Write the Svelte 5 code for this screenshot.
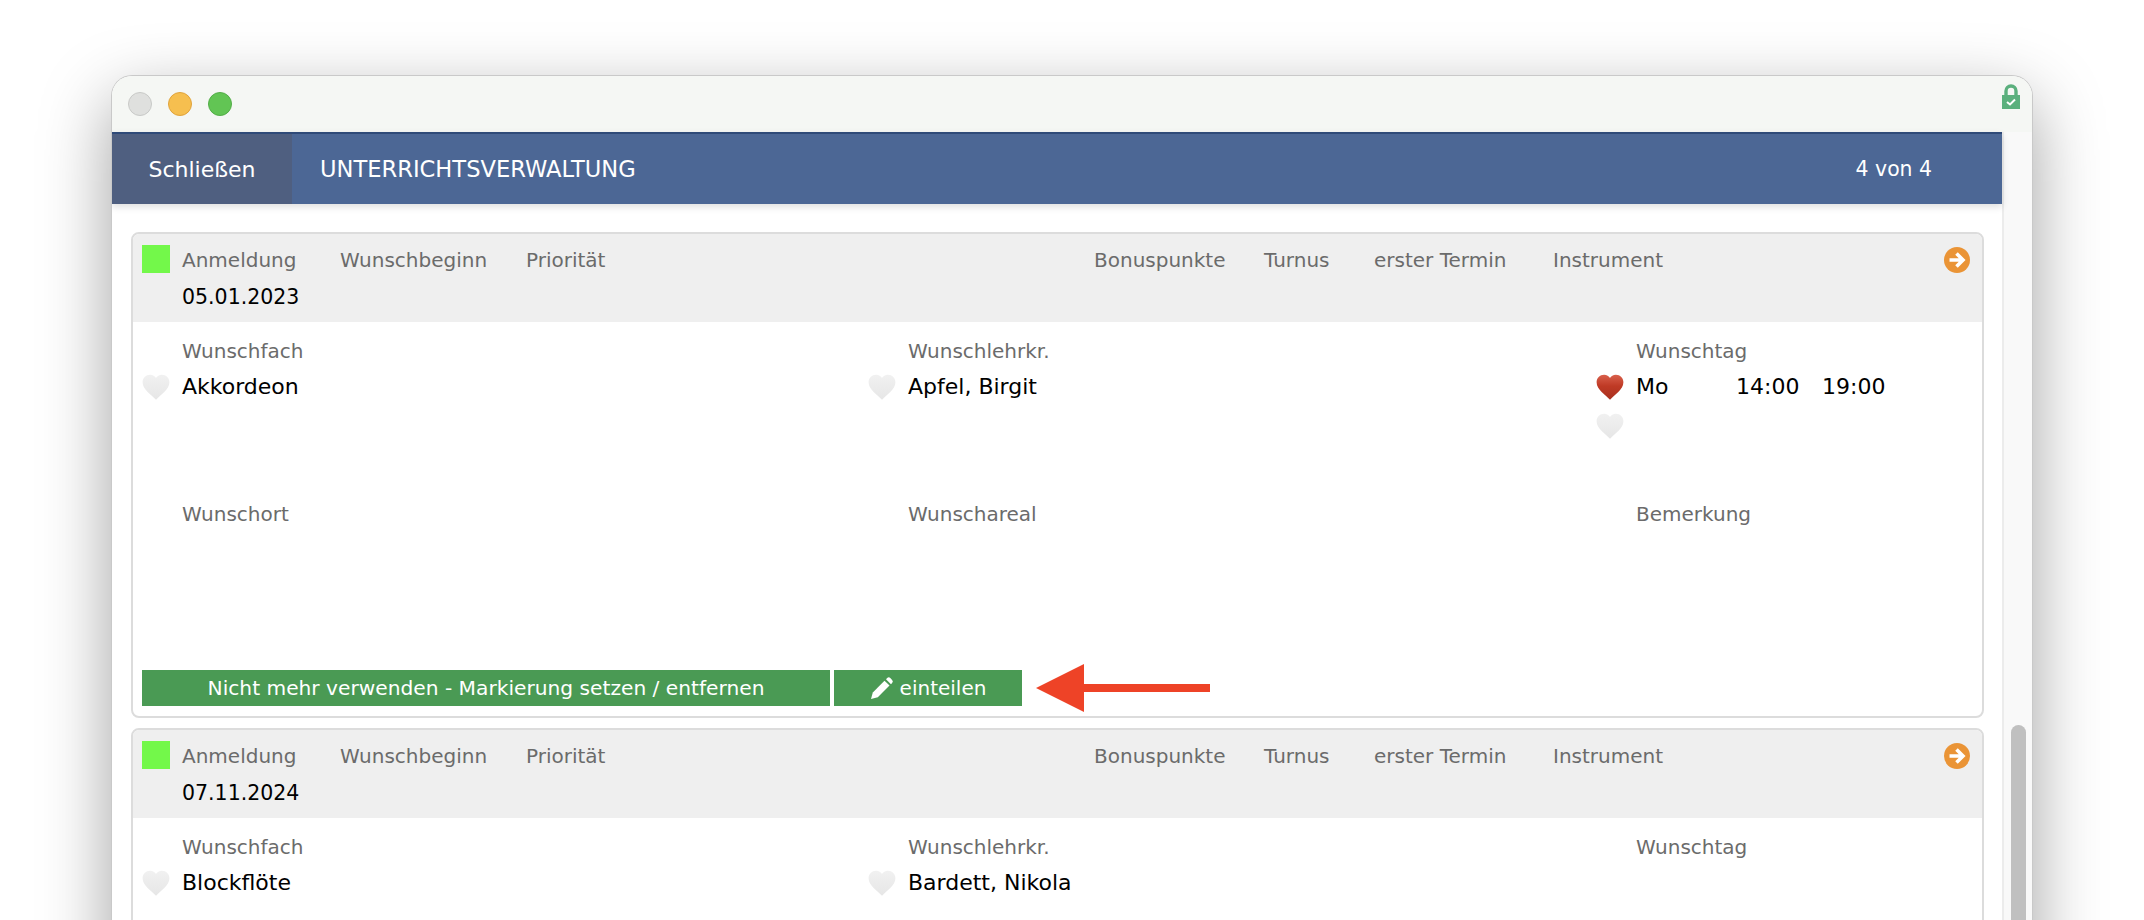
<script lang="ts">
    const cards = [
        {
            date: "05.01.2023",
            subject: "Akkordeon",
            teacher: "Apfel, Birgit",
            days: [{ day: "Mo", from: "14:00", to: "19:00", fav: true }, { day: "", from: "", to: "", fav: false }],
            full: true
        },
        {
            date: "07.11.2024",
            subject: "Blockflöte",
            teacher: "Bardett, Nikola",
            days: [],
            full: false
        }
    ];

    const headLabels = ["Wunschbeginn", "Priorität", "Bonuspunkte", "Turnus", "erster Termin", "Instrument"];
</script>

{#snippet heart(fav)}
    <svg class="heart" viewBox="0 0 28 26" aria-hidden="true">
        <path
            d="M14 25C10 20 1.500 15.500 1.500 8.500 1.500 4.500 4.500 1.500 8.500 1.500c2.500 0 4.500 1.200 5.500 3 1-1.800 3-3 5.500-3 4 0 7 3 7 7C26.500 15.500 18 20 14 25z"
            fill={fav ? "url(#red)" : "url(#grey)"}
        />
    </svg>
{/snippet}

<svg class="defs" aria-hidden="true">
    <defs>
        <linearGradient id="red" x1="0" y1="0" x2="0" y2="1">
            <stop offset="0" stop-color="#d9604c" />
            <stop offset="0.45" stop-color="#bf3a25" />
            <stop offset="1" stop-color="#a8301f" />
        </linearGradient>
        <linearGradient id="grey" x1="0" y1="0" x2="0" y2="1">
            <stop offset="0" stop-color="#f1f1f1" />
            <stop offset="1" stop-color="#e6e6e6" />
        </linearGradient>
    </defs>
</svg>

<div class="page">
    <div class="window">
        <div class="titlebar">
            <div class="lights">
                <span class="light grey"></span>
                <span class="light yellow"></span>
                <span class="light green"></span>
            </div>
            <svg class="lock" viewBox="0 0 18 25" aria-hidden="true">
                <path d="M4 12V7a5 5 0 0 1 10 0v5" fill="none" stroke="#5bb07d" stroke-width="3.400" />
                <rect x="0" y="11" width="18" height="14" fill="#5bb07d" />
                <path d="M5 18l3 2.500 5-5" fill="none" stroke="#fff" stroke-width="2" />
            </svg>
        </div>

        <div class="content">
            <div class="main">
                <div class="topbar">
                    <button class="close">Schließen</button>
                    <div class="title">UNTERRICHTSVERWALTUNG</div>
                    <div class="count">4 von 4</div>
                </div>

                <div class="list">
                    {#each cards as card}
                        <section class="card" class:full={card.full}>
                            <div class="head">
                                <span class="flag"></span>
                                <div class="cell">
                                    <span class="label">Anmeldung</span>
                                    <span class="value date">{card.date}</span>
                                </div>
                                {#each headLabels as label}
                                    <span class="label">{label}</span>
                                {/each}
                                <svg class="go" viewBox="0 0 26 26" aria-hidden="true">
                                    <circle cx="13" cy="13" r="13" fill="#ea9436" />
                                    <path d="M5.500 13h13M12.500 6.500l6.500 6.500-6.500 6.500" fill="none" stroke="#fff" stroke-width="3.600" />
                                </svg>
                            </div>

                            <div class="body">
                                <div class="fields">
                                    <div class="field">
                                        <span class="label">Wunschfach</span>
                                        <div class="row">
                                            {@render heart(false)}
                                            <span class="value">{card.subject}</span>
                                        </div>
                                    </div>
                                    <div class="field">
                                        <span class="label">Wunschlehrkr.</span>
                                        <div class="row">
                                            {@render heart(false)}
                                            <span class="value">{card.teacher}</span>
                                        </div>
                                    </div>
                                    <div class="field">
                                        <span class="label">Wunschtag</span>
                                        <div class="days">
                                            {#each card.days as d}
                                                <div class="row">
                                                    {@render heart(d.fav)}
                                                    <span class="value day">{d.day}</span>
                                                    <span class="value from">{d.from}</span>
                                                    <span class="value">{d.to}</span>
                                                </div>
                                            {/each}
                                        </div>
                                    </div>
                                    {#if card.full}
                                        <div class="field"><span class="label">Wunschort</span></div>
                                        <div class="field"><span class="label">Wunschareal</span></div>
                                        <div class="field"><span class="label">Bemerkung</span></div>
                                    {/if}
                                </div>

                                {#if card.full}
                                    <div class="actions">
                                        <button class="action wide">Nicht mehr verwenden - Markierung setzen / entfernen</button>
                                        <button class="action narrow">
                                            <svg class="pencil" viewBox="0 0 24 24" aria-hidden="true">
                                                <path d="M1 23l1.800-6.500L14.500 4.800l5 4.800L7.800 21.300z" fill="#fff" />
                                                <path d="M16 3.300l1.200-1.200a2.200 2.200 0 0 1 3.100 0l1.800 1.800a2.200 2.200 0 0 1 0 3.100L21 8.200z" fill="#fff" />
                                            </svg>
                                            einteilen
                                        </button>
                                        <svg class="arrow" viewBox="0 0 174 48" aria-hidden="true">
                                            <path d="M0 24L48 0v20h126v8H48v20z" fill="#ee4327" />
                                        </svg>
                                    </div>
                                {/if}
                            </div>
                        </section>
                    {/each}
                </div>
            </div>

            <div class="track">
                <div class="thumb"></div>
            </div>
        </div>
    </div>
</div>

<style>
    :global(body) {
        margin: 0;
        background: #fff;
    }

    .defs {
        position: absolute;
        width: 0;
        height: 0;
    }

    .page {
        height: 920px;
        overflow: hidden;
        padding: 76px 112px 0;
        box-sizing: border-box;
        font-family: "DejaVu Sans", Verdana, sans-serif;
        font-size: 20px;
    }

    .window {
        width: 1920px;
        height: 900px;
        display: flex;
        flex-direction: column;
        border-radius: 20px 20px 0 0;
        background: #fff;
        box-shadow: 0 0 0 1px #c9c9c9, 0 24px 70px rgba(0, 0, 0, 0.38);
        overflow: hidden;
    }

    .titlebar {
        height: 56px;
        flex: none;
        display: flex;
        justify-content: space-between;
        background: #f5f7f4;
    }

    .lights {
        display: flex;
        gap: 16px;
        padding: 16px 0 0 16px;
    }

    .light {
        width: 24px;
        height: 24px;
        border-radius: 50%;
        box-sizing: border-box;
        border: 1px solid;
    }

    .grey { background: #dfe0de; border-color: #c8c9c7; }
    .yellow { background: #f6bf4f; border-color: #e0a33c; }
    .green { background: #62c554; border-color: #53ad48; }

    .lock {
        width: 18px;
        height: 25px;
        margin: 8px 12px 0 0;
    }

    .content {
        flex: 1;
        display: flex;
        min-height: 0;
    }

    .main {
        flex: 1;
        min-width: 0;
    }

    .topbar {
        height: 72px;
        display: flex;
        align-items: center;
        box-sizing: border-box;
        border-top: 2px solid #2f4a78;
        background: #4c6795;
        color: #fff;
        box-shadow: 0 3px 7px rgba(0, 0, 0, 0.13);
        position: relative;
    }

    .close {
        width: 180px;
        height: 100%;
        border: 0;
        padding: 0;
        background: #4f5f80;
        color: inherit;
        font: inherit;
        font-size: 22px;
    }

    .title {
        flex: 1;
        padding-left: 28px;
        font-size: 22.6px;
    }

    .count {
        padding-right: 70px;
        font-size: 20.4px;
    }

    .list {
        display: flex;
        flex-direction: column;
        gap: 10px;
        padding: 28px 18px 0 19px;
    }

    .card {
        border: 2px solid #dcdcdc;
        border-radius: 8px;
        overflow: hidden;
    }

    .head {
        height: 88px;
        box-sizing: border-box;
        padding: 12px 0 0 9px;
        display: grid;
        grid-template-columns: 40px 158px 186px 568px 170px 110px 179px 1fr auto;
        background: #efefef;
    }

    .flag {
        width: 28px;
        height: 28px;
        margin-top: -1px;
        background: #73f84a;
    }

    .cell {
        display: flex;
        flex-direction: column;
        gap: 9px;
    }

    .label,
    .value {
        line-height: 28px;
        white-space: nowrap;
    }

    .label {
        color: #6b6b6b;
    }

    .value {
        color: #000;
        font-size: 22px;
    }

    .value.date {
        font-size: 20.5px;
    }

    .go {
        width: 26px;
        height: 26px;
        margin: 1px 12px 0 0;
    }

    .body {
        padding: 15px 0 10px 10px;
    }

    .fields {
        display: grid;
        grid-template-columns: 726px 728px 1fr;
        grid-auto-rows: 163px;
    }

    .card.full .fields {
        grid-template-rows: 163px 170px;
    }

    .field {
        display: flex;
        flex-direction: column;
        gap: 8px;
    }

    .field > .label {
        padding-left: 39px;
    }

    .days {
        display: flex;
        flex-direction: column;
        gap: 11px;
    }

    .row {
        display: flex;
        align-items: center;
        height: 28px;
    }

    .heart {
        width: 30px;
        height: 28px;
        margin: 0 11px 0 -2px;
        flex: none;
    }

    .day { width: 100px; }
    .from { width: 86px; }

    .actions {
        display: flex;
        align-items: center;
        height: 36px;
    }

    .action {
        height: 36px;
        border: 0;
        padding: 0;
        background: #4a9a54;
        color: #fff;
        font: inherit;
        display: flex;
        align-items: center;
        justify-content: center;
    }

    .wide {
        width: 688px;
        margin-right: 4px;
        margin-left: -1px;
        font-size: 20.2px;
    }

    .narrow {
        width: 188px;
        gap: 6px;
    }

    .pencil {
        width: 24px;
        height: 24px;
    }

    .arrow {
        width: 174px;
        height: 48px;
        margin: -6px 0 -6px 14px;
        flex: none;
    }

    .track {
        width: 30px;
        flex: none;
        box-sizing: border-box;
        border-left: 2px solid #ececec;
        background: #f9f9f9;
        padding: 593px 6px 0 7px;
    }

    .thumb {
        height: 400px;
        border-radius: 8px 8px 0 0;
        background: #c0c0c0;
    }
</style>
